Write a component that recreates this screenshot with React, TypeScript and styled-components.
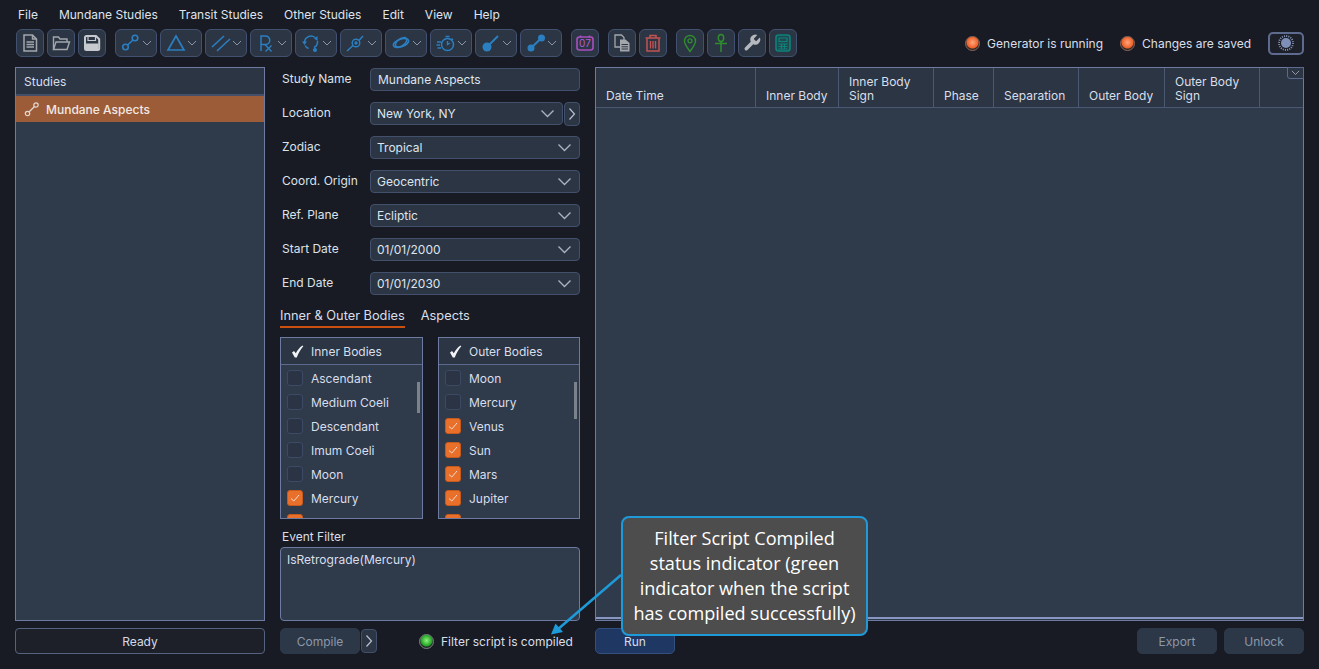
import React from 'react';
import styled, { createGlobalStyle } from 'styled-components';

const GlobalStyle = createGlobalStyle`
  html, body {
    margin: 0;
    padding: 0;
    height: 100%;
    background: #181b23;
    overflow: hidden;
  }
  #root {
    height: 100%;
  }
`;

const BLUE = '#2b7fc1';
const GREY = '#a3a7ac';
const BORDER = '#6d7ba3';

const Page = styled.div`
  position: relative;
  display: flex;
  flex-direction: column;
  width: 1319px;
  height: 669px;
  padding: 0 15px;
  box-sizing: border-box;
  background: #181b23;
  color: #d9dfea;
  font-family: Inter, 'Liberation Sans', sans-serif;
  font-size: 12px;
`;

const MenuBar = styled.div`
  display: flex;
  align-items: center;
  gap: 21px;
  height: 29px;
  padding-left: 3px;
  color: #dfe4ee;
`;

const Toolbar = styled.div`
  display: flex;
  align-items: center;
  height: 28px;
  margin: 0 0 10px 1px;
`;

const ToolGroup = styled.div`
  display: flex;
  gap: 3px;
  margin-right: 9px;
`;

const ToolButton = styled.div<{ $wide?: boolean }>`
  display: flex;
  align-items: center;
  justify-content: ${p => (p.$wide ? 'flex-start' : 'center')};
  width: ${p => (p.$wide ? '42px' : '28px')};
  height: 28px;
  padding-left: ${p => (p.$wide ? '5px' : '0')};
  box-sizing: border-box;
  background: #2b3543;
  border: 1px solid #435170;
  border-radius: 6px;
`;

const ChevronSlot = styled.span`
  display: flex;
  margin-left: auto;
  margin-right: 4px;
`;

const StatusArea = styled.div`
  display: flex;
  align-items: center;
  margin-left: auto;
`;

const StatusItem = styled.div`
  display: flex;
  align-items: center;
  gap: 7px;
  margin-right: 17px;
`;

const Lamp = styled.span<{ $on: 'orange' | 'green' }>`
  display: block;
  flex-shrink: 0;
  width: 15px;
  height: 15px;
  box-sizing: border-box;
  border-radius: 50%;
  border: 1.5px solid ${p => (p.$on === 'orange' ? '#8d6a5c' : '#7f8483')};
  background: ${p =>
    p.$on === 'orange'
      ? 'radial-gradient(circle at 50% 42%, #ffa77c 0, #ee5f28 56%, #2f2622 66%)'
      : 'radial-gradient(circle at 50% 42%, #8cf57a 0, #1f9f24 56%, #202624 66%)'};
`;

const ThemeButton = styled.div`
  display: flex;
  align-items: center;
  justify-content: center;
  width: 36px;
  height: 23px;
  box-sizing: border-box;
  border: 2px solid #5d6b8f;
  border-radius: 5px;
  background: #1d2029;
`;

const Columns = styled.div`
  display: grid;
  grid-template-columns: 250px 300px 709px;
  column-gap: 15px;
`;

const MainArea = styled(Columns)`
  height: 554px;
`;

const Panel = styled.div`
  display: flex;
  flex-direction: column;
  box-sizing: border-box;
  min-height: 0;
  background: #2f3a4b;
  border: 1px solid ${BORDER};
  overflow: hidden;
`;

const StudiesHeader = styled.div`
  display: flex;
  align-items: center;
  height: 26px;
  padding-left: 8px;
  background: #2b3543;
  border-bottom: 2px solid #454f6a;
`;

const StudyRow = styled.div`
  display: flex;
  align-items: center;
  gap: 6px;
  height: 26px;
  padding-left: 8px;
  background: #9c5c38;
  color: #f1e9e4;
  font-weight: 500;
`;

const FormColumn = styled.div`
  display: flex;
  flex-direction: column;
  padding-top: 1px;
  min-height: 0;
`;

const FieldRow = styled.div`
  display: flex;
  align-items: center;
  height: 23px;
  margin-bottom: 11px;
`;

const FieldLabel = styled.label`
  width: 90px;
  padding-left: 2px;
  box-sizing: border-box;
  color: #dce1ea;
  margin-top: -2px;
`;

const FieldBox = styled.div<{ $select?: boolean }>`
  display: flex;
  flex: 1;
  align-items: center;
  justify-content: space-between;
  height: 23px;
  box-sizing: border-box;
  padding: 0 7px 0 ${p => (p.$select ? '6px' : '7px')};
  background: #2b3543;
  border: 1px solid #43506c;
  border-radius: 4px;
  color: #dfe4ee;
`;

const NextButton = styled.div`
  display: flex;
  align-items: center;
  justify-content: center;
  width: 16px;
  height: 24px;
  margin-left: 1px;
  box-sizing: border-box;
  background: #2b3543;
  border: 1px solid #43506c;
  border-radius: 4px;
`;

const Tabs = styled.div`
  display: flex;
  gap: 16px;
  height: 20px;
  margin-top: 2px;
`;

const Tab = styled.div<{ $active?: boolean }>`
  box-sizing: border-box;
  height: 20px;
  line-height: 15px;
  font-size: 12.8px;
  border-bottom: 2px solid ${p => (p.$active ? '#c9500f' : 'transparent')};
`;

const BodyLists = styled.div`
  display: grid;
  grid-template-columns: 143px 142px;
  column-gap: 15px;
  height: 182px;
  margin-top: 9px;
`;

const ListHeader = styled.div`
  display: flex;
  align-items: center;
  flex-shrink: 0;
  height: 26px;
  padding-left: 10px;
  gap: 7px;
  background: #2b3543;
  border-bottom: 1px solid #5c6a92;
`;

const ListBody = styled.div`
  position: relative;
  flex: 1;
  min-height: 0;
  padding-top: 1px;
  overflow: hidden;
`;

const ListRow = styled.div`
  display: flex;
  align-items: center;
  gap: 8px;
  height: 24px;
  padding-left: 6px;
  color: #d8deea;
`;

const CheckBox = styled.span<{ $checked: boolean }>`
  display: flex;
  align-items: center;
  justify-content: center;
  flex-shrink: 0;
  width: 16px;
  height: 16px;
  box-sizing: border-box;
  border-radius: 3px;
  background: ${p => (p.$checked ? '#e9702b' : '#2a3444')};
  border: 1px solid ${p => (p.$checked ? '#c65a1c' : '#3d4a66')};
`;

const ScrollThumb = styled.span<{ $height: number }>`
  position: absolute;
  top: 17px;
  right: 2px;
  width: 3px;
  height: ${p => p.$height}px;
  background: #7c828a;
`;

const FilterLabel = styled.div`
  height: 28px;
  line-height: 35px;
  padding-left: 2px;
  box-sizing: border-box;
`;

const FilterBox = styled.div`
  flex: 1;
  padding: 4px 6px;
  box-sizing: border-box;
  background: #2f3a4b;
  border: 1px solid ${BORDER};
  border-radius: 4px;
`;

const TableHead = styled.div`
  display: grid;
  grid-template-columns: 160px 83px 95px 60px 85px 86px 95px 1fr;
  flex-shrink: 0;
  height: 40px;
  box-sizing: border-box;
  background: #2b3543;
  border-bottom: 1px solid #4b5874;
`;

const HeadCell = styled.div`
  display: flex;
  align-items: flex-end;
  box-sizing: border-box;
  padding: 0 8px 4px 10px;
  line-height: 14px;
  border-right: 1px solid #4b5874;

  &:last-child {
    border-right: none;
  }
`;

const TableBody = styled.div`
  flex: 1;
`;

const TableFoot = styled.div`
  flex-shrink: 0;
  height: 3px;
  box-sizing: border-box;
  border-top: 2px solid #8a96c2;
  background: #2f3a4b;
`;

const ColumnMenu = styled.div`
  position: absolute;
  top: 67px;
  left: 1287px;
  display: flex;
  align-items: center;
  justify-content: center;
  width: 17px;
  height: 12px;
  box-sizing: border-box;
  background: #2b3543;
  border: 1px solid #5c6a92;
  border-radius: 0 0 0 3px;
`;

const BottomBar = styled(Columns)`
  height: 26px;
  margin-top: 7px;
`;

const ActionButton = styled.div<{ $tone?: 'muted' | 'primary' }>`
  display: flex;
  align-items: center;
  justify-content: center;
  width: 80px;
  height: 26px;
  box-sizing: border-box;
  border-radius: 5px;
  background: ${p => (p.$tone === 'primary' ? '#1f3763' : '#2c3748')};
  border: 1px solid ${p => (p.$tone === 'primary' ? '#33507f' : '#2c3748')};
  color: ${p => (p.$tone === 'primary' ? '#d5dceb' : '#8d98a9')};
`;

const ReadyBar = styled.div`
  display: flex;
  align-items: center;
  justify-content: center;
  height: 26px;
  box-sizing: border-box;
  border: 1px solid #56637f;
  border-radius: 4px;
  background: #1d2029;
  color: #d4dae6;
`;

const CompileGroup = styled.div`
  display: flex;
  align-items: center;
`;

const CompiledStatus = styled.div`
  display: flex;
  align-items: center;
  gap: 7px;
  margin-left: 42px;
`;

const RunRow = styled.div`
  display: flex;
  align-items: center;
  gap: 7px;
`;

const RunSpacer = styled.div`
  flex: 1;
`;

const Callout = styled.div`
  position: absolute;
  left: 621px;
  top: 516px;
  display: flex;
  align-items: center;
  justify-content: center;
  width: 247px;
  height: 120px;
  box-sizing: border-box;
  background: #4d4d4d;
  border: 2.5px solid #1f9ad8;
  border-radius: 8px;
  color: #fff;
  font-family: 'Open Sans', 'Liberation Sans', sans-serif;
  font-size: 18.1px;
  line-height: 25px;
  text-align: center;
`;

const CalloutArrow = styled.svg`
  position: absolute;
  left: 545px;
  top: 570px;
  width: 80px;
  height: 70px;
`;

const Chevron = ({ size = 10, color = '#96a0b3' }: { size?: number; color?: string }) => (
  <svg width={size} height={size * 0.6} viewBox="0 0 10 6" fill="none" stroke={color} strokeWidth="0.9">
    <path d="M1 1l4 4 4-4" />
  </svg>
);

const SelectChevron = () => <Chevron size={15} color="#aab2c2" />;

const NextChevron = () => (
  <svg width="8" height="14" viewBox="0 0 8 14" fill="none" stroke="#b9c1d0" strokeWidth="1.2">
    <path d="M1.5 1.5L6.5 7l-5 5.5" />
  </svg>
);

type IconProps = { children: React.ReactNode; size?: number };

const Icon = ({ children, size = 20 }: IconProps) => (
  <svg width={size} height={size} viewBox="0 0 20 20" fill="none">
    {children}
  </svg>
);

const leftIcons = [
  <Icon key="new">
    <path d="M4 2h8.500L16.500 6v12H4z M12.500 2v4h4" stroke={GREY} strokeWidth="1.500" />
    <path d="M6.500 9h7.500M6.500 11.500h7.500M6.500 14h7.500" stroke={GREY} strokeWidth="1.300" />
  </Icon>,
  <Icon key="open">
    <path d="M2.500 16.500V4h5l1.500 2h7v3" stroke={GREY} strokeWidth="1.400" />
    <path d="M2.500 16.500L5 9h13.500L16 16.500z" stroke={GREY} strokeWidth="1.400" />
  </Icon>,
  <Icon key="save">
    <path d="M3 4.500A1.500 1.500 0 014.500 3H14l3.200 3.200v9.300a1.500 1.500 0 01-1.500 1.500H4.500A1.500 1.500 0 013 15.500z" stroke="#c6c9cd" strokeWidth="2" />
    <path d="M6 3.500h7.500v4H6z" stroke="#c6c9cd" strokeWidth="1.200" />
    <path d="M4 10.500h12.500V17H4z" fill="#c6c9cd" />
  </Icon>,
];

const wideIcons = [
  <Icon key="aspect">
    <circle cx="4.500" cy="14" r="2.800" stroke={BLUE} strokeWidth="1.600" />
    <circle cx="14" cy="5" r="2.800" stroke={BLUE} strokeWidth="1.600" />
    <path d="M6.500 12l5.500-5" stroke={BLUE} strokeWidth="1.600" />
  </Icon>,
  <Icon key="triangle">
    <path d="M10 3L18 17H2z" stroke={BLUE} strokeWidth="1.700" />
  </Icon>,
  <Icon key="parallel">
    <path d="M1 14L13 3M6 18L19 6" stroke={BLUE} strokeWidth="1.600" />
  </Icon>,
  <Icon key="retrograde">
    <path d="M5 18V3h4.500a4.200 4.200 0 010 8.500H5" stroke={BLUE} strokeWidth="1.500" />
    <path d="M9 11.500l6.500 7M15.500 12.500l-6 6" stroke={BLUE} strokeWidth="1.400" />
  </Icon>,
  <Icon key="cycle">
    <path d="M3.500 10A6.500 6.500 0 0114 4.500" stroke={BLUE} strokeWidth="1.500" />
    <path d="M16.500 8a6.500 6.500 0 01-3.500 6.500" stroke={BLUE} strokeWidth="1.500" />
    <path d="M1 8.500h5L3.500 12zM16.500 3v5l-3.500-2.500z" fill={BLUE} />
    <path d="M4 12.500a6.500 6.500 0 003.500 3" stroke={BLUE} strokeWidth="1.500" />
    <circle cx="14" cy="17" r="2" fill={BLUE} />
  </Icon>,
  <Icon key="node">
    <path d="M1 18L7 12.500M13 7.500L17 3" stroke={BLUE} strokeWidth="1.500" />
    <circle cx="10" cy="10" r="3.800" stroke={BLUE} strokeWidth="1.400" />
    <circle cx="10" cy="10" r="1.700" fill={BLUE} />
  </Icon>,
  <Icon key="rings">
    <ellipse cx="10" cy="10" rx="8" ry="3.800" transform="rotate(-20 10 10)" stroke={BLUE} strokeWidth="1.700" />
    <ellipse cx="10.500" cy="9.500" rx="6.500" ry="3.500" transform="rotate(-35 10 10)" stroke={BLUE} strokeWidth="1.500" />
  </Icon>,
  <Icon key="timer">
    <circle cx="11.500" cy="11.500" r="6" stroke={BLUE} strokeWidth="1.500" />
    <path d="M11.500 8v3.500L14 10M9.500 3.500h4M15.500 5.500l1.500 1.500" stroke={BLUE} strokeWidth="1.400" />
    <path d="M1 9h4M0.500 12h3.500M1.500 15h3.500" stroke={BLUE} strokeWidth="1.300" />
  </Icon>,
  <Icon key="ball">
    <circle cx="6" cy="14" r="4.500" fill={BLUE} />
    <path d="M8 12L17 3" stroke={BLUE} strokeWidth="2" />
  </Icon>,
  <Icon key="link">
    <circle cx="5" cy="15" r="3.500" fill={BLUE} />
    <circle cx="15.500" cy="5" r="3.500" fill={BLUE} />
    <path d="M5 15L15.500 5" stroke={BLUE} strokeWidth="2" />
  </Icon>,
];

const fileIcons = [
  <Icon key="copy">
    <path d="M3 2h6.500L12 4.500V14H3z" stroke={GREY} strokeWidth="1.300" />
    <path d="M8 6.500h5.500L17.500 10v8.500H8z" fill={GREY} />
    <path d="M9.500 11.500h6.500M9.500 13.800h6.500M9.500 16h6.500" stroke="#2b3543" strokeWidth="1" />
  </Icon>,
  <Icon key="trash">
    <path d="M2.500 5h15M7 5V2.500h6V5" stroke="#c25353" strokeWidth="1.500" />
    <path d="M4 5.500V18h12V5.500" stroke="#c25353" strokeWidth="1.500" />
    <path d="M7.500 8v7.500M10 8v7.500M12.500 8v7.500" stroke="#c25353" strokeWidth="1.400" />
  </Icon>,
];

const toolIcons = [
  <Icon key="pin">
    <path d="M10 18.500C7 14 4.500 11.500 4.500 8a5.500 5.500 0 0111 0c0 3.500-2.500 6-5.500 10.500z" stroke="#2f8c2f" strokeWidth="1.400" />
    <circle cx="10" cy="7.800" r="2" stroke="#2f8c2f" strokeWidth="1.300" />
  </Icon>,
  <Icon key="ankh">
    <ellipse cx="10" cy="5" rx="2.700" ry="3.500" stroke="#2f8c2f" strokeWidth="1.500" />
    <path d="M10 8.500V19M4 10.500h12" stroke="#2f8c2f" strokeWidth="1.500" />
  </Icon>,
  <Icon key="wrench">
    <path
      transform="scale(0.83)"
      d="M14.700 6.300a1 1 0 0 0 0 1.400l1.600 1.600a1 1 0 0 0 1.400 0l3.770-3.770a6 6 0 0 1-7.940 7.940l-6.910 6.910a2.120 2.120 0 0 1-3-3l6.910-6.910a6 6 0 0 1 7.940-7.940l-3.760 3.760z"
      fill="#b4b8bd"
    />
  </Icon>,
  <Icon key="calc">
    <rect x="3" y="2" width="14" height="16" rx="2.500" fill="#214a50" stroke="#0c827a" strokeWidth="1.600" />
    <path d="M6 5h8v3.500H6z" stroke="#0c827a" strokeWidth="1.200" />
    <path d="M5.500 11h9M5.500 13.500h9M5.500 16h9M8.500 10.500v5.500M11.500 10.500v5.500" stroke="#0c827a" strokeWidth="1.100" />
  </Icon>,
];

const SunIcon = () => (
  <svg width="16" height="16" viewBox="0 0 16 16" fill="none">
    <circle cx="8" cy="8" r="5" fill="#7f90b8" />
    <circle cx="8" cy="8" r="7" stroke="#8a99bd" strokeWidth="1.800" strokeDasharray="1 1.200" />
  </svg>
);

const StudyIcon = () => (
  <svg width="16" height="16" viewBox="0 0 16 16" fill="none" stroke="#e2d8d2" strokeWidth="1.200">
    <circle cx="3.500" cy="12.500" r="2.200" />
    <circle cx="12" cy="4" r="2.200" />
    <path d="M5 11l5.500-5.500" />
  </svg>
);

const TickMark = () => (
  <svg width="10" height="10" viewBox="0 0 10 10" fill="none" stroke="#f5dccb" strokeWidth="1">
    <path d="M1 5.500L3.800 8 9 2" />
  </svg>
);

const HeaderCheck = () => (
  <svg width="13" height="13" viewBox="0 0 13 13" fill="#f1f3f7">
    <path d="M1 7.500l2-1.500 1.800 2.300C6.500 5 8.500 2.500 11.500 0.500l.8.700C9.500 4.500 7.500 8 5.800 12.500H3.800z" />
  </svg>
);

const fields = [
  { label: 'Zodiac', value: 'Tropical' },
  { label: 'Coord. Origin', value: 'Geocentric' },
  { label: 'Ref. Plane', value: 'Ecliptic' },
  { label: 'Start Date', value: '01/01/2000' },
  { label: 'End Date', value: '01/01/2030' },
];

const innerBodies: [string, boolean][] = [
  ['Ascendant', false],
  ['Medium Coeli', false],
  ['Descendant', false],
  ['Imum Coeli', false],
  ['Moon', false],
  ['Mercury', true],
  ['Venus', true],
];

const outerBodies: [string, boolean][] = [
  ['Moon', false],
  ['Mercury', false],
  ['Venus', true],
  ['Sun', true],
  ['Mars', true],
  ['Jupiter', true],
  ['Saturn', true],
];

const columns = [
  'Date Time',
  'Inner Body',
  'Inner Body Sign',
  'Phase',
  'Separation',
  'Outer Body',
  'Outer Body Sign',
  '',
];

const BodyList = ({ title, items, thumb }: { title: string; items: [string, boolean][]; thumb: number }) => (
  <Panel>
    <ListHeader>
      <HeaderCheck />
      {title}
    </ListHeader>
    <ListBody>
      {items.map(([name, checked]) => (
        <ListRow key={name}>
          <CheckBox $checked={checked}>{checked && <TickMark />}</CheckBox>
          {name}
        </ListRow>
      ))}
      <ScrollThumb $height={thumb} />
    </ListBody>
  </Panel>
);

export default function App() {
  return (
    <Page>
      <GlobalStyle />
      <MenuBar>
        {['File', 'Mundane Studies', 'Transit Studies', 'Other Studies', 'Edit', 'View', 'Help'].map(item => (
          <span key={item}>{item}</span>
        ))}
      </MenuBar>
      <Toolbar>
        <ToolGroup>
          {leftIcons.map((icon, i) => (
            <ToolButton key={i}>{icon}</ToolButton>
          ))}
        </ToolGroup>
        <ToolGroup>
          {wideIcons.map((icon, i) => (
            <ToolButton key={i} $wide>
              {icon}
              <ChevronSlot>
                <Chevron />
              </ChevronSlot>
            </ToolButton>
          ))}
        </ToolGroup>
        <ToolGroup>
          <ToolButton>
            <svg width="20" height="20" viewBox="0 0 20 20" fill="none">
              <rect x="2" y="4" width="16" height="13" rx="2.500" stroke="#a94fc0" strokeWidth="1.600" />
              <path d="M5.500 2.500v2M14.500 2.500v2" stroke="#a94fc0" strokeWidth="1.500" />
              <text x="10" y="14.300" textAnchor="middle" fontSize="10" fill="#b65dd0" fontFamily="Inter, sans-serif">
                07
              </text>
            </svg>
          </ToolButton>
        </ToolGroup>
        <ToolGroup>
          {fileIcons.map((icon, i) => (
            <ToolButton key={i}>{icon}</ToolButton>
          ))}
        </ToolGroup>
        <ToolGroup>
          {toolIcons.map((icon, i) => (
            <ToolButton key={i}>{icon}</ToolButton>
          ))}
        </ToolGroup>
        <StatusArea>
          <StatusItem>
            <Lamp $on="orange" />
            Generator is running
          </StatusItem>
          <StatusItem>
            <Lamp $on="orange" />
            Changes are saved
          </StatusItem>
          <ThemeButton>
            <SunIcon />
          </ThemeButton>
        </StatusArea>
      </Toolbar>
      <MainArea>
        <Panel>
          <StudiesHeader>Studies</StudiesHeader>
          <StudyRow>
            <StudyIcon />
            Mundane Aspects
          </StudyRow>
        </Panel>
        <FormColumn>
          <FieldRow>
            <FieldLabel>Study Name</FieldLabel>
            <FieldBox>Mundane Aspects</FieldBox>
          </FieldRow>
          <FieldRow>
            <FieldLabel>Location</FieldLabel>
            <FieldBox $select>
              New York, NY
              <SelectChevron />
            </FieldBox>
            <NextButton>
              <NextChevron />
            </NextButton>
          </FieldRow>
          {fields.map(field => (
            <FieldRow key={field.label}>
              <FieldLabel>{field.label}</FieldLabel>
              <FieldBox $select>
                {field.value}
                <SelectChevron />
              </FieldBox>
            </FieldRow>
          ))}
          <Tabs>
            <Tab $active>Inner &amp; Outer Bodies</Tab>
            <Tab>Aspects</Tab>
          </Tabs>
          <BodyLists>
            <BodyList title="Inner Bodies" items={innerBodies} thumb={31} />
            <BodyList title="Outer Bodies" items={outerBodies} thumb={37} />
          </BodyLists>
          <FilterLabel>Event Filter</FilterLabel>
          <FilterBox>IsRetrograde(Mercury)</FilterBox>
        </FormColumn>
        <Panel>
          <TableHead>
            {columns.map((column, i) => (
              <HeadCell key={i}>{column}</HeadCell>
            ))}
          </TableHead>
          <TableBody />
          <TableFoot />
        </Panel>
      </MainArea>
      <BottomBar>
        <ReadyBar>Ready</ReadyBar>
        <CompileGroup>
          <ActionButton $tone="muted">Compile</ActionButton>
          <NextButton>
            <NextChevron />
          </NextButton>
          <CompiledStatus>
            <Lamp $on="green" />
            Filter script is compiled
          </CompiledStatus>
        </CompileGroup>
        <RunRow>
          <ActionButton $tone="primary">Run</ActionButton>
          <RunSpacer />
          <ActionButton $tone="muted">Export</ActionButton>
          <ActionButton $tone="muted">Unlock</ActionButton>
        </RunRow>
      </BottomBar>
      <ColumnMenu>
        <Chevron size={9} color="#aeb6c6" />
      </ColumnMenu>
      <CalloutArrow viewBox="0 0 80 70" fill="none">
        <path d="M76 5L12 60" stroke="#1f9ad8" strokeWidth="2.500" />
        <path d="M6 64.500L10.500 53.500L18 62z" fill="#1f9ad8" />
      </CalloutArrow>
      <Callout>
        Filter Script Compiled
        <br />
        status indicator (green
        <br />
        indicator when the script
        <br />
        has compiled successfully)
      </Callout>
    </Page>
  );
}
